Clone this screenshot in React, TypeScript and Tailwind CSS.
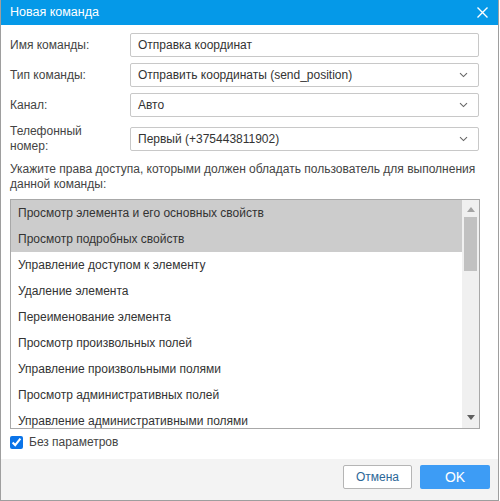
import { useState } from 'react'

const rights = [
  'Просмотр элемента и его основных свойств',
  'Просмотр подробных свойств',
  'Управление доступом к элементу',
  'Удаление элемента',
  'Переименование элемента',
  'Просмотр произвольных полей',
  'Управление произвольными полями',
  'Просмотр административных полей',
  'Управление административными полями',
]

function Chevron() {
  return (
    <svg width="9" height="6" viewBox="0 0 9 6" className="shrink-0">
      <path d="M1 1.2 L4.5 4.6 L8 1.2" fill="none" stroke="#666" strokeWidth="1.1" />
    </svg>
  )
}

function Select({ value }: { value: string }) {
  return (
    <div className="flex h-[24px] flex-1 items-center justify-between rounded-[2px] border border-[#c8c8c8] pl-[7px] pr-[10px] text-[#333]">
      <span>{value}</span>
      <Chevron />
    </div>
  )
}

export default function App() {
  const [noParams, setNoParams] = useState(true)

  return (
    <div className="flex h-[501px] w-[499px] flex-col border-x border-b border-[#9e9e9e] bg-white font-['Liberation_Sans',Arial,sans-serif] text-[12px] leading-[15px] text-[#444]">
      {/* title */}
      <div className="flex h-[25px] shrink-0 items-center justify-between bg-[#0599e8] pl-[9px] pr-[10px] text-[12.5px] text-white">
        <span>Новая команда</span>
        <svg width="11" height="11" viewBox="0 0 11 11">
          <path d="M0.5 0.5 L10.5 10.5 M10.5 0.5 L0.5 10.5" stroke="#fff" strokeWidth="1.4" />
        </svg>
      </div>

      <div className="flex flex-1 flex-col pl-[9px] pr-[19px]">
        <div className="mt-[8px] flex items-center">
          <span className="w-[120px]">Имя команды:</span>
          <div className="flex h-[24px] flex-1 items-center rounded-[2px] border border-[#c8c8c8] pl-[7px] text-[#333]">
            Отправка координат
          </div>
        </div>
        <div className="mt-[6px] flex items-center">
          <span className="w-[120px]">Тип команды:</span>
          <Select value="Отправить координаты (send_position)" />
        </div>
        <div className="mt-[6px] flex items-center">
          <span className="w-[120px]">Канал:</span>
          <Select value="Авто" />
        </div>
        <div className="mt-[6px] flex h-[32px] items-center">
          <span className="w-[120px]">
            Телефонный
            <br />
            номер:
          </span>
          <Select value="Первый (+375443811902)" />
        </div>

        <p className="mt-[7px]">
          Укажите права доступа, которыми должен обладать пользователь для выполнения данной команды:
        </p>

        <div className="mt-[7px] flex h-[230px] w-[470px] overflow-hidden border border-[#a8a8a8] text-[#333]">
          <ul className="flex-1">
            {rights.map((r, i) => (
              <li
                key={r}
                className={`flex h-[26px] items-center whitespace-nowrap pl-[7px] ${i < 2 ? 'bg-[#cccccc]' : ''}`}
              >
                {r}
              </li>
            ))}
          </ul>
          <div className="flex w-[17px] shrink-0 flex-col items-center bg-[#f0f0f0]">
            <svg width="8" height="5" viewBox="0 0 8 5" className="mt-[7px]">
              <path d="M0 5 L4 0 L8 5 Z" fill="#a3a3a3" />
            </svg>
            <div className="mt-[5px] h-[54px] w-[13px] bg-[#c1c1c1]" />
            <svg width="8" height="5" viewBox="0 0 8 5" className="mb-[8px] mt-auto">
              <path d="M0 0 L8 0 L4 5 Z" fill="#606060" />
            </svg>
          </div>
        </div>

        <label className="mt-[6px] flex items-center gap-[6px]">
          <input
            type="checkbox"
            checked={noParams}
            onChange={e => setNoParams(e.target.checked)}
            className="m-0 h-[13px] w-[13px] accent-[#0b74e8]"
          />
          Без параметров
        </label>
      </div>

      <div className="flex h-[41px] shrink-0 items-start justify-end gap-[8px] bg-[#f3f3f3] pr-[8px] pt-[6px]">
        <button className="h-[24px] w-[69px] rounded-[2px] border border-[#b5b5b5] bg-white text-[#2c6797]">
          Отмена
        </button>
        <button className="h-[24px] w-[70px] rounded-[2px] bg-[#3d9cf5] text-[14px] text-white">OK</button>
      </div>
    </div>
  )
}
